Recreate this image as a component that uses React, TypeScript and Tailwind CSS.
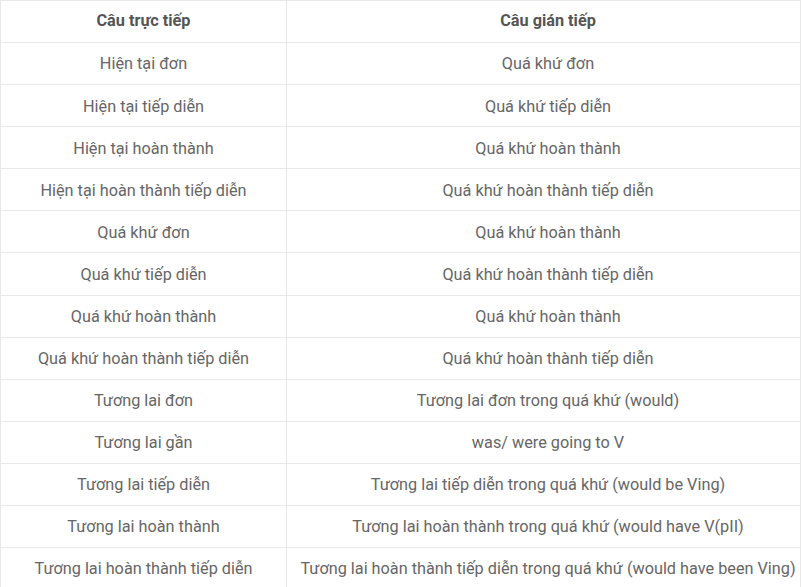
import React from "react";

const rows: [string, string][] = [
  ["Hiện tại đơn", "Quá khứ đơn"],
  ["Hiện tại tiếp diễn", "Quá khứ tiếp diễn"],
  ["Hiện tại hoàn thành", "Quá khứ hoàn thành"],
  ["Hiện tại hoàn thành tiếp diễn", "Quá khứ hoàn thành tiếp diễn"],
  ["Quá khứ đơn", "Quá khứ hoàn thành"],
  ["Quá khứ tiếp diễn", "Quá khứ hoàn thành tiếp diễn"],
  ["Quá khứ hoàn thành", "Quá khứ hoàn thành"],
  ["Quá khứ hoàn thành tiếp diễn", "Quá khứ hoàn thành tiếp diễn"],
  ["Tương lai đơn", "Tương lai đơn trong quá khứ (would)"],
  ["Tương lai gần", "was/ were going to V"],
  ["Tương lai tiếp diễn", "Tương lai tiếp diễn trong quá khứ (would be Ving)"],
  ["Tương lai hoàn thành", "Tương lai hoàn thành trong quá khứ (would have V(pII)"],
  ["Tương lai hoàn thành tiếp diễn", "Tương lai hoàn thành tiếp diễn trong quá khứ (would have been Ving)"],
];

export default function App() {
  return (
    <div className="w-[802px] h-[587px] overflow-hidden bg-white" style={{ fontFamily: "Roboto, 'Noto Sans', sans-serif" }}>
      <table className="w-[800px] border-collapse table-fixed text-[16.25px] text-[#666]">
        <colgroup>
          <col className="w-[286px]" />
          <col className="w-[514px]" />
        </colgroup>
        <thead>
          <tr className="h-[42.08px]">
            <th className="border border-[#e8e8e8] font-bold text-[#555] text-center align-middle p-0">Câu trực tiếp</th>
            <th className="border border-[#e8e8e8] font-bold text-[#555] text-center align-middle p-0 pl-[9px]">Câu gián tiếp</th>
          </tr>
        </thead>
        <tbody>
          {rows.map(([a, b], i) => (
            <tr key={i} className="h-[42.08px]">
              <td className="border border-[#e8e8e8] text-center align-middle p-0 pt-[2px]">{a}</td>
              <td className="border border-[#e8e8e8] text-center align-middle p-0 pt-[2px] pl-[9px] whitespace-nowrap">{b}</td>
            </tr>
          ))}
        </tbody>
      </table>
    </div>
  );
}
